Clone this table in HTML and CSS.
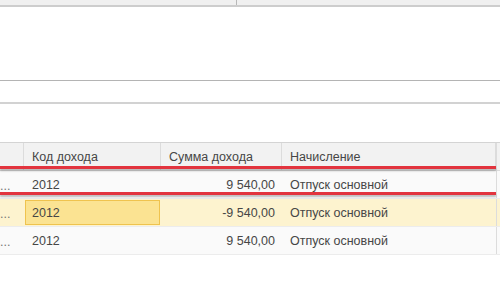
FILE: index.html
```html
<!DOCTYPE html>
<html lang="ru">
<head>
<meta charset="utf-8">
<link rel="stylesheet" href="styles.css">
</head>
<body>
<div class="page">
  <div class="topbar"><div class="topcell"></div></div>
  <div class="panel"></div>
  <div class="field"></div>
  <div class="spacer"></div>
  <div class="table">
    <div class="row head">
      <div class="c c0"></div>
      <div class="c c1">Код дохода</div>
      <div class="c c2">Сумма дохода</div>
      <div class="c c3">Начисление</div>
      <div class="c c4"></div>
    </div>
    <div class="row">
      <div class="c c0 dots">...</div>
      <div class="c c1">2012</div>
      <div class="c c2 num">9 540,00</div>
      <div class="c c3">Отпуск основной</div>
      <div class="c c4"></div>
    </div>
    <div class="row sel">
      <div class="c c0 dots">...</div>
      <div class="c c1"><span class="focus">2012</span></div>
      <div class="c c2 num">-9 540,00</div>
      <div class="c c3">Отпуск основной</div>
      <div class="c c4"></div>
    </div>
    <div class="row">
      <div class="c c0 dots">...</div>
      <div class="c c1">2012</div>
      <div class="c c2 num">9 540,00</div>
      <div class="c c3">Отпуск основной</div>
      <div class="c c4"></div>
    </div>
    <div class="mark mark1"></div>
    <div class="mark mark2"></div>
  </div>
</div>
</body>
</html>
```
FILE: styles.css
```css
html, body {
  margin: 0;
  padding: 0;
  background: #ffffff;
}
body {
  width: 500px;
  height: 300px;
  overflow: hidden;
  font-family: "Liberation Sans", Arial, sans-serif;
  font-size: 12.5px;
  color: #464646;
}
.topbar {
  height: 5px;
  background: #f0f0f0;
  border-bottom: 2px solid #cdcdcd;
  display: flex;
}
.topcell {
  width: 236px;
  border-right: 1px solid #b8b8b8;
}
.panel {
  height: 73px;
  border-bottom: 1px solid #b4b4b4;
}
.field {
  height: 21px;
  border-bottom: 2px solid #d2d2d2;
}
.spacer {
  height: 38px;
}
.table {
  position: relative;
  border-top: 1px solid #d4d4d4;
}
.row {
  display: grid;
  grid-template-columns: 24px 137px 121px 214px 4px;
  height: 28px;
  background: #fafafa;
  border-bottom: 1px solid #ececec;
  box-sizing: border-box;
}
.row.head {
  background: #f2f2f2;
  border-bottom: 1px solid #dcdcdc;
}
.row.sel {
  background: #fdf3cf;
}
.c {
  display: flex;
  align-items: center;
  padding: 0 8px;
  white-space: nowrap;
  overflow: hidden;
  box-sizing: border-box;
}
.head .c {
  border-right: 1px solid #dcdcdc;
}
.head .c4 {
  border-right: none;
}
.c4 {
  border-left: 1px solid #dcdcdc;
  padding: 0;
}
.c0 {
  padding: 0;
}
.dots {
  color: #777;
  padding-top: 2px;
}
.num {
  justify-content: flex-end;
  padding-right: 7px;
}
.c1 {
  padding: 0 0 0 8px;
}
.sel .c1 {
  padding: 1px;
}
.focus {
  display: flex;
  align-items: center;
  width: 100%;
  height: 100%;
  box-sizing: border-box;
  padding-left: 6px;
  background: #fbe392;
  border: 1px solid #efc34e;
}
.mark {
  position: absolute;
  left: 0;
  width: 496px;
  height: 3px;
  background: #e2343e;
  box-shadow: 0 2px 2px rgba(0, 0, 0, 0.25);
}
.mark1 {
  top: 23px;
}
.mark2 {
  top: 49px;
}
```
